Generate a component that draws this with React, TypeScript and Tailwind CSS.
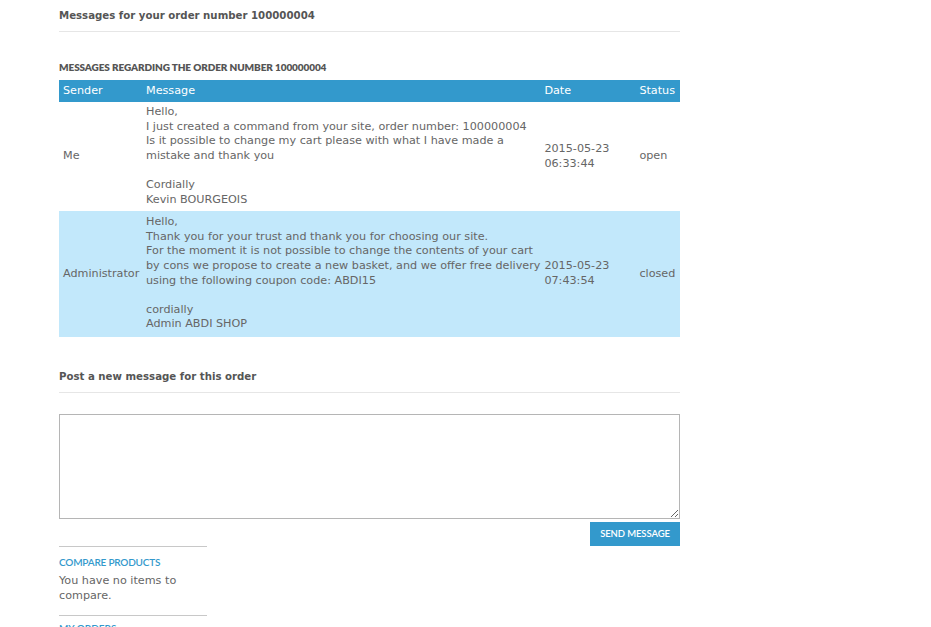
import React from 'react';

const rows = [
  {
    sender: 'Me',
    lines: [
      'Hello,',
      'I just created a command from your site, order number: 100000004',
      'Is it possible to change my cart please with what I have made a',
      'mistake and thank you',
      '',
      'Cordially',
      'Kevin BOURGEOIS',
    ],
    date: '2015-05-23 06:33:44',
    status: 'open',
    bg: 'bg-white',
    pad: 'pt-[3px] pb-[4px]',
  },
  {
    sender: 'Administrator',
    lines: [
      'Hello,',
      'Thank you for your trust and thank you for choosing our site.',
      'For the moment it is not possible to change the contents of your cart',
      'by cons we propose to create a new basket, and we offer free delivery',
      'using the following coupon code: ABDI15',
      '',
      'cordially',
      'Admin ABDI SHOP',
    ],
    date: '2015-05-23 07:43:54',
    status: 'closed',
    bg: 'bg-[#c2e8fb]',
    pad: 'pt-[4px] pb-[5px]',
  },
];

export default function App() {
  return (
    <div className="min-h-[627px] bg-white font-['DejaVu_Sans',Verdana,sans-serif] text-[11.2px] text-[#666]">
      <div className="ml-[59px] w-[621px]">
        <div className="border-b border-[#e6e6e6] pt-[9px] pb-[8px]">
          <h1 className="text-[10.2px] font-bold leading-[14px] text-[#555]">
            Messages for your order number 100000004
          </h1>
        </div>

        <h2 className="mt-[29px] mb-[6px] font-['Lato',sans-serif] text-[10px] font-extrabold uppercase leading-[13px] tracking-[-0.1px] text-[#555]">
          Messages regarding the order number 100000004
        </h2>

        <table className="w-full border-collapse text-left">
          <thead>
            <tr className="h-[22px] bg-[#3399cc] text-white">
              <th className="w-[83px] pl-[4px] font-normal">Sender</th>
              <th className="w-[398px] pl-[4px] font-normal">Message</th>
              <th className="w-[95px] pl-[4px] font-normal">Date</th>
              <th className="pl-[4px] font-normal">Status</th>
            </tr>
          </thead>
          <tbody>
            {rows.map((r) => (
              <tr key={r.sender} className={r.bg}>
                <td className="pl-[4px] align-middle">{r.sender}</td>
                <td className={`${r.pad} pl-[4px] align-middle leading-[14.6px]`}>
                  {r.lines.map((l, i) => (
                    <div key={i} className="h-[14.6px] whitespace-nowrap">
                      {l}
                    </div>
                  ))}
                </td>
                <td className="pl-[4px] pr-[4px] align-middle leading-[14.6px]">
                  {r.date.split(' ').map((d) => (
                    <div key={d}>{d}</div>
                  ))}
                </td>
                <td className="pl-[4px] align-middle">{r.status}</td>
              </tr>
            ))}
          </tbody>
        </table>

        <div className="mt-[33px] border-b border-[#e6e6e6] pb-[8px]">
          <h2 className="text-[10.2px] font-bold leading-[14px] text-[#555]">
            Post a new message for this order
          </h2>
        </div>

        <textarea className="mt-[21px] block h-[105px] w-full resize border border-[#b5b5b5] bg-white p-[4px] outline-none" />

        <div className="mt-[3px] flex justify-end">
          <button className="h-[24px] w-[90px] bg-[#3399cc] font-['Lato',sans-serif] text-[9.5px] font-semibold uppercase tracking-[-0.1px] text-white">
            Send message
          </button>
        </div>

        <div className="w-[148px]">
          <div className="border-t border-[#c8c8c8] pt-[9px]">
            <div className="font-['Lato',sans-serif] text-[10px] font-semibold uppercase leading-[12px] tracking-[-0.2px] text-[#3399cc]">
              Compare products
            </div>
            <p className="mt-[5px] pb-[12px] leading-[15px] text-[#666]">
              You have no items to compare.
            </p>
          </div>
          <div className="border-t border-[#c8c8c8] pt-[6px]">
            <div className="font-['Lato',sans-serif] text-[10px] font-semibold uppercase leading-[12px] text-[#3399cc]">
              My orders
            </div>
          </div>
        </div>
      </div>
    </div>
  );
}
